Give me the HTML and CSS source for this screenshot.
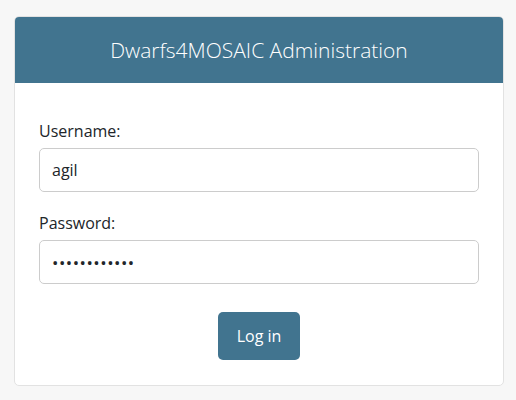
FILE: index.html
```html
<!DOCTYPE html>
<html>
<head>
<meta charset="utf-8">
<link rel="stylesheet" href="styles.css">
</head>
<body>
<div class="page">
  <div class="card">
    <div class="card-header">Dwarfs4MOSAIC Administration</div>
    <form class="card-body">
      <div class="group">
        <label class="label">Username:</label>
        <input class="field" type="text" value="agil">
      </div>
      <div class="group group-pass">
        <label class="label">Password:</label>
        <input class="field field-pass" type="password" value="adminpass123">
      </div>
      <div class="actions">
        <button class="btn" type="button">Log in</button>
      </div>
    </form>
  </div>
</div>
</body>
</html>
```
FILE: styles.css
```css
html, body {
  margin: 0;
  padding: 0;
  background: #f7f7f7;
  font-family: "Open Sans", "Noto Sans", sans-serif;
  color: #212529;
}
.page {
  padding: 16px 12px 0 14px;
}
.card {
  background: #fff;
  border: 1px solid #e2e2e2;
  border-radius: 5px;
  overflow: hidden;
}
.card-header {
  background: #41748f;
  color: #fff;
  height: 67px;
  margin: -1px -1px 0 -1px;
  display: flex;
  align-items: center;
  justify-content: center;
  font-size: 21px;
  font-weight: 300;
}
.card-body {
  padding: 37px 24px 25px 24px;
  margin: 0;
}
.group {
  display: flex;
  flex-direction: column;
}
.group-pass {
  margin-top: 20px;
}
.label {
  font-size: 16px;
  line-height: 22px;
  margin-bottom: 6px;
}
.field {
  box-sizing: border-box;
  height: 44px;
  width: 100%;
  border: 1px solid #cccccc;
  border-radius: 5px;
  padding: 0 12px;
  font-family: inherit;
  font-size: 16px;
  color: #212529;
  background: #fff;
  outline: none;
}
.field-pass {
  letter-spacing: 0.5px;
  font-size: 17px;
}
.actions {
  display: flex;
  justify-content: center;
  margin-top: 28px;
}
.btn {
  width: 82px;
  height: 48px;
  border: none;
  border-radius: 5px;
  background: #41748f;
  color: #fff;
  font-family: inherit;
  font-size: 16px;
  padding: 0;
}
```
